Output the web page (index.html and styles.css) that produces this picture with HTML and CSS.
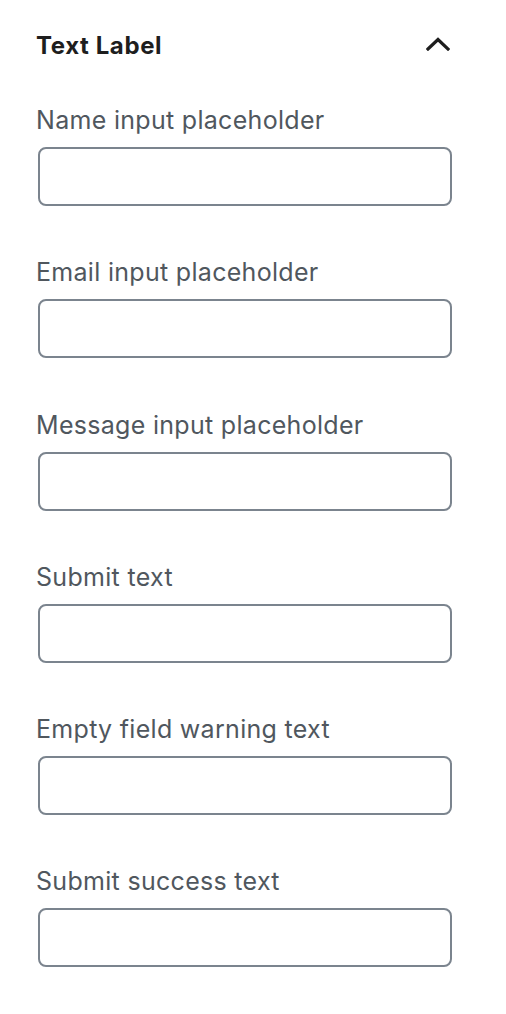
FILE: index.html
```html
<!DOCTYPE html>
<html>
<head>
<meta charset="utf-8">
<link rel="stylesheet" href="styles.css">
</head>
<body>
<div class="panel">
  <div class="header">
    <span class="title">Text Label</span>
    <svg class="chevron" width="24" height="14" viewBox="0 0 24 14"><path d="M2 12 L12 2.5 L22 12" fill="none" stroke="#1e1e1e" stroke-width="3.2" stroke-linecap="square"/></svg>
  </div>
  <div class="fields">
    <label class="field"><span class="label">Name input placeholder</span><input class="input" type="text"></label>
    <label class="field"><span class="label">Email input placeholder</span><input class="input" type="text"></label>
    <label class="field"><span class="label">Message input placeholder</span><input class="input" type="text"></label>
    <label class="field"><span class="label">Submit text</span><input class="input" type="text"></label>
    <label class="field"><span class="label">Empty field warning text</span><input class="input" type="text"></label>
    <label class="field"><span class="label">Submit success text</span><input class="input" type="text"></label>
  </div>
</div>
</body>
</html>
```
FILE: styles.css
```css
html, body {
  margin: 0;
  background: #ffffff;
}
body {
  font-family: Inter, "Noto Sans", sans-serif;
}
.panel {
  width: 506px;
  box-sizing: border-box;
  padding: 31px 54px 0 36px;
}
.header {
  display: flex;
  justify-content: space-between;
  align-items: center;
  height: 30px;
}
.title {
  font-size: 24px;
  line-height: 30px;
  font-weight: 700;
  letter-spacing: 0.6px;
  color: #1e1e1e;
}
.chevron {
  display: block;
  margin-right: 2px;
  margin-bottom: 4px;
}
.fields {
  display: flex;
  flex-direction: column;
  gap: 51.3px;
  margin-top: 44px;
}
.field {
  display: flex;
  flex-direction: column;
  gap: 12px;
}
.label {
  font-size: 25px;
  line-height: 30px;
  letter-spacing: 0.3px;
  color: #50575e;
}
.input {
  display: block;
  box-sizing: border-box;
  width: 414px;
  height: 59px;
  margin: 0 0 0 2px;
  border: 2px solid #7b848e;
  border-radius: 8px;
  background: #fff;
  outline: none;
}
```
